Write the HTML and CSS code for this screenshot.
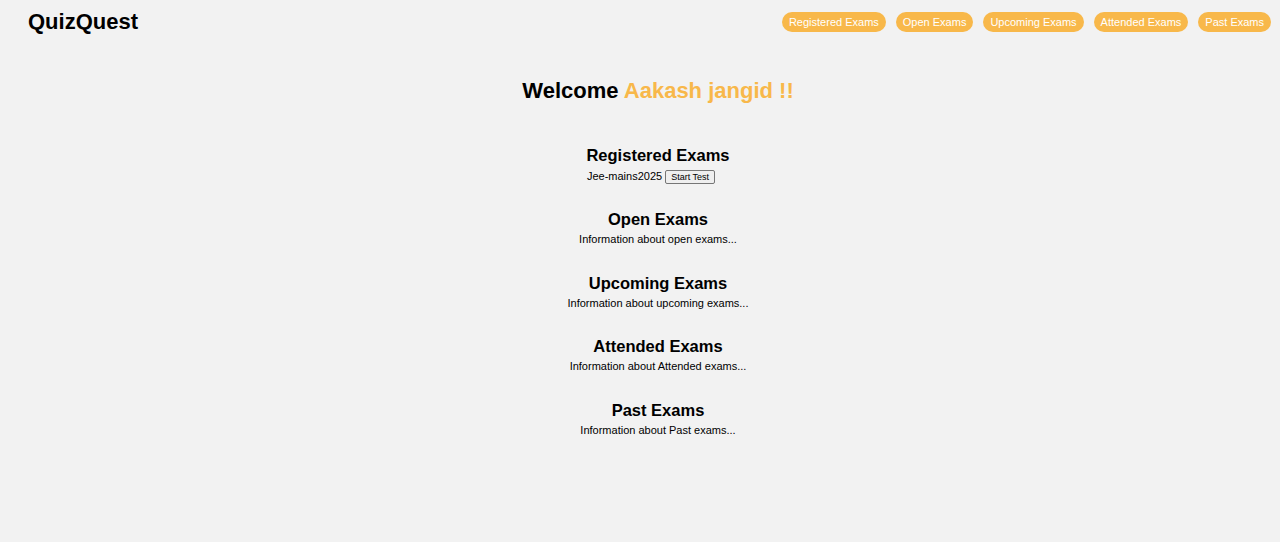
FILE: index.html
```html
<!DOCTYPE html>
<html>
<head>
<meta charset="utf-8">
<link rel="stylesheet" href="styles.css">
</head>
<body>
<header class="topbar">
  <div class="logo">QuizQuest</div>
  <nav class="nav">
    <a class="pill">Registered Exams</a>
    <a class="pill">Open Exams</a>
    <a class="pill">Upcoming Exams</a>
    <a class="pill">Attended Exams</a>
    <a class="pill">Past Exams</a>
  </nav>
</header>
<main class="main">
  <h1 class="welcome">Welcome <span class="name">Aakash jangid !!</span></h1>
  <section class="sec">
    <h2>Registered Exams</h2>
    <p class="reg">Jee-mains2025 <button class="btn">Start Test</button></p>
  </section>
  <section class="sec">
    <h2>Open Exams</h2>
    <p>Information about open exams...</p>
  </section>
  <section class="sec">
    <h2>Upcoming Exams</h2>
    <p>Information about upcoming exams...</p>
  </section>
  <section class="sec">
    <h2>Attended Exams</h2>
    <p>Information about Attended exams...</p>
  </section>
  <section class="sec">
    <h2>Past Exams</h2>
    <p>Information about Past exams...</p>
  </section>
</main>
</body>
</html>
```

FILE: styles.css
```css
html, body {
  margin: 0;
  padding: 0;
  background: #f2f2f2;
  font-family: "Liberation Sans", Arial, sans-serif;
  color: #000;
}
.topbar {
  display: flex;
  justify-content: space-between;
  align-items: center;
  padding: 10px 9px 0 28px;
  height: 24px;
}
.logo {
  font-size: 22px;
  font-weight: bold;
}
.nav {
  display: flex;
  gap: 10px;
}
.pill {
  display: flex;
  align-items: center;
  height: 20px;
  padding: 0 7px;
  border-radius: 10px;
  background: #f8b84a;
  color: #fff;
  font-size: 11px;
}
.main {
  padding-left: 36px;
  text-align: center;
}
.welcome {
  margin: 43px 0 0;
  font-size: 22px;
  line-height: 28px;
  font-weight: bold;
}
.name {
  color: #f8b84a;
}
.sec {
  margin-top: 23.4px;
}
.sec:first-of-type {
  margin-top: 40px;
}
.sec h2 {
  margin: 0;
  font-size: 16.5px;
  line-height: 20px;
  font-weight: bold;
}
.sec p {
  margin: 0;
  font-size: 11px;
  line-height: 20px;
}
.sec p.reg {
  margin-top: 1px;
  margin-bottom: 4px;
}
.btn {
  font-family: "Liberation Sans", Arial, sans-serif;
  font-size: 9px;
  height: 14px;
  padding: 0 5px;
  margin-right: 14px;
  background: #efefef;
  border: 1px solid #767676;
  border-radius: 2px;
  vertical-align: middle;
}
```
